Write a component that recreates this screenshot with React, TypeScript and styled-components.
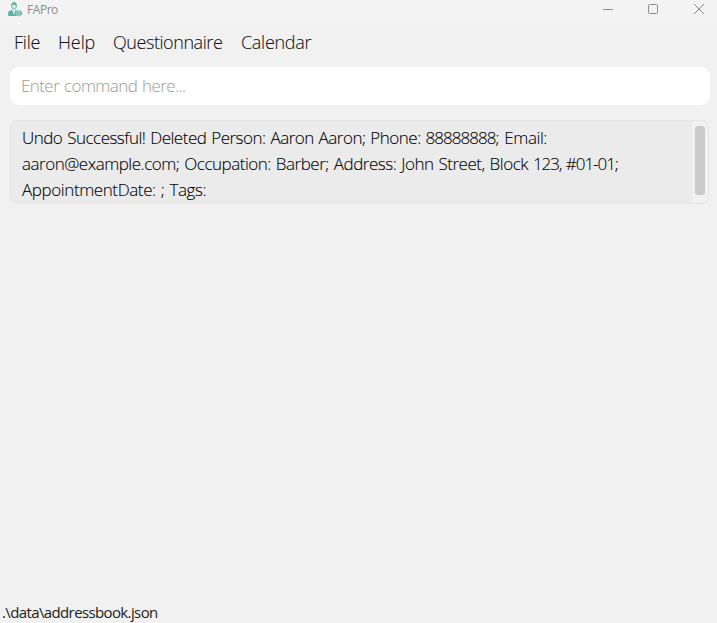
import React from 'react';
import styled, { createGlobalStyle } from 'styled-components';

const GlobalStyle = createGlobalStyle`
  *, *::before, *::after { box-sizing: border-box; }
  body { margin: 0; background: #f1f1f1; font-family: "Open Sans", "Noto Sans", sans-serif; }
`;

const Window = styled.div`
  display: flex;
  flex-direction: column;
  width: 100%;
  height: 100vh;
  overflow: hidden;
  background: #f1f1f1;
`;

const TitleBar = styled.header`
  display: flex;
  align-items: center;
  flex: none;
  height: 25px;
  padding: 0 12px 6px 8px;
  background: #f3f3f3;
`;

const Title = styled.span`
  flex: 1;
  margin-left: 4px;
  font-size: 12px;
  line-height: 18px;
  letter-spacing: -0.45px;
  color: #8c8c8c;
`;

const WindowControls = styled.div`
  display: flex;
  gap: 34px;
  padding-bottom: 1px;
  color: #8b8b8b;

  svg { display: block; }
`;

const MenuBar = styled.nav`
  display: flex;
  flex: none;
  height: 42px;
  padding-left: 14px;
`;

const MenuItem = styled.span<{ $width: number; $tracking: number }>`
  flex: none;
  width: ${({ $width }) => $width}px;
  font-size: 18px;
  font-weight: 300;
  line-height: 35px;
  letter-spacing: ${({ $tracking }) => $tracking}px;
  white-space: nowrap;
  color: #111;
  -webkit-text-stroke: 0.1px #111;
`;

const CommandInput = styled.input`
  flex: none;
  height: 38px;
  margin: 0 7px 0 10px;
  padding: 0 11px 2px;
  border: 0;
  border-radius: 9px;
  outline: none;
  background: #fff;
  font: 300 17px "Open Sans", "Noto Sans", sans-serif;
  letter-spacing: -0.58px;
  word-spacing: 1px;

  &::placeholder { color: #999; opacity: 1; }
`;

const ResultPanel = styled.section`
  display: flex;
  flex: none;
  height: 84px;
  margin: 15px 8px 0 10px;
  border: 1px solid #e5e5e5;
  border-radius: 7px;
  background: #ebebeb;
  overflow: hidden;
`;

const ResultText = styled.div`
  flex: 1;
  padding: 4px 0 0 11px;
  color: #000;
  word-spacing: 1px;
  -webkit-text-stroke: 0.1px #000;
`;

const ResultLine = styled.div`
  font-size: 17px;
  font-weight: 300;
  line-height: 26px;
  white-space: pre;
`;

const Run = styled.span<{ $tracking: number }>`
  letter-spacing: ${({ $tracking }) => $tracking}px;
`;

const ScrollTrack = styled.div`
  flex: none;
  width: 16px;
  padding: 5px 3px 8px;
  background: #f1f1f1;
`;

const ScrollThumb = styled.div`
  width: 10px;
  height: 69px;
  border-radius: 3px;
  background: #cbcbcb;
`;

const StatusBar = styled.footer`
  flex: none;
  margin-top: auto;
  height: 21px;
  padding-left: 2px;
  font-size: 15px;
  line-height: 21px;
  letter-spacing: -0.62px;
  color: #1c1c1c;
`;

const menus = [
  { label: 'File', width: 44, tracking: -0.2 },
  { label: 'Help', width: 55, tracking: -0.1 },
  { label: 'Questionnaire', width: 128, tracking: -0.44 },
  { label: 'Calendar', width: 80, tracking: -0.3 },
];

// Digits are set tighter than the surrounding words.
const resultLines = [
  [
    { text: 'Undo Successful! Deleted Person: Aaron Aaron; Phone: ', tracking: -0.51 },
    { text: '88888888', tracking: -0.95 },
    { text: '; Email:', tracking: -0.4 },
  ],
  [
    { text: 'aaron@example.com; Occupation: Barber; Address: John Street, Block ', tracking: -0.48 },
    { text: '123, #01-01;', tracking: -1.05 },
  ],
  [{ text: 'AppointmentDate: ; Tags:', tracking: -0.4 }],
];

function AppIcon() {
  return (
    <svg width="15" height="15" viewBox="0 0 15 15" fill="none">
      <path d="M3.6 4.2C3.4 2 4.3.7 6 .7s2.7 1.2 2.4 3.5L7.7 6.4 6 7.4 4.4 6.4Z" fill="#e2eeeb" stroke="#55b5a5" />
      <path d="M3.5 3.7C3.3 1.7 4.3.4 6.1.4s2.6 1.4 2.3 3.3C7.2 3 5.7 2.7 4.8 2.7Z" fill="#55b5a5" />
      <path d="M.2 14v-3.2c0-1.7 1.5-2.2 3.8-2.9L6 11l1.8-3.1c1.9.6 3.2 1 3.7 2V14Z" fill="#55b5a5" />
      <path d="m5.2 8.4.8.8.9-.8-.4 4H5.6Z" fill="#dceae8" />
      <circle cx="11.2" cy="11.3" r="3" fill="#55b5a5" stroke="#d7e9e6" strokeWidth=".6" />
      <path d="M12.2 10.1c-.6-.5-2-.4-2 .4 0 1 2 .5 2 1.5 0 .8-1.4.9-2.1.4" stroke="#e6f1ef" strokeWidth=".7" />
    </svg>
  );
}

export default function App() {
  return (
    <>
      <GlobalStyle />
      <Window>
        <TitleBar>
          <AppIcon />
          <Title>FAPro</Title>
          <WindowControls>
            <svg width="12" height="12" viewBox="0 0 12 12" stroke="currentColor"><path d="M2 6.5h10" /></svg>
            <svg width="12" height="12" viewBox="0 0 12 12" fill="none" stroke="currentColor"><rect x="1.5" y="1.5" width="9" height="9" rx="1" /></svg>
            <svg width="12" height="12" viewBox="0 0 12 12" stroke="currentColor"><path d="m1 1 10 10M11 1 1 11" /></svg>
          </WindowControls>
        </TitleBar>
        <MenuBar>
          {menus.map((m) => (
            <MenuItem key={m.label} $width={m.width} $tracking={m.tracking}>{m.label}</MenuItem>
          ))}
        </MenuBar>
        <CommandInput placeholder="Enter command here..." />
        <ResultPanel>
          <ResultText>
            {resultLines.map((runs, i) => (
              <ResultLine key={i}>
                {runs.map((r) => (
                  <Run key={r.text} $tracking={r.tracking}>{r.text}</Run>
                ))}
              </ResultLine>
            ))}
          </ResultText>
          <ScrollTrack><ScrollThumb /></ScrollTrack>
        </ResultPanel>
        <StatusBar>.\data\addressbook.json</StatusBar>
      </Window>
    </>
  );
}
